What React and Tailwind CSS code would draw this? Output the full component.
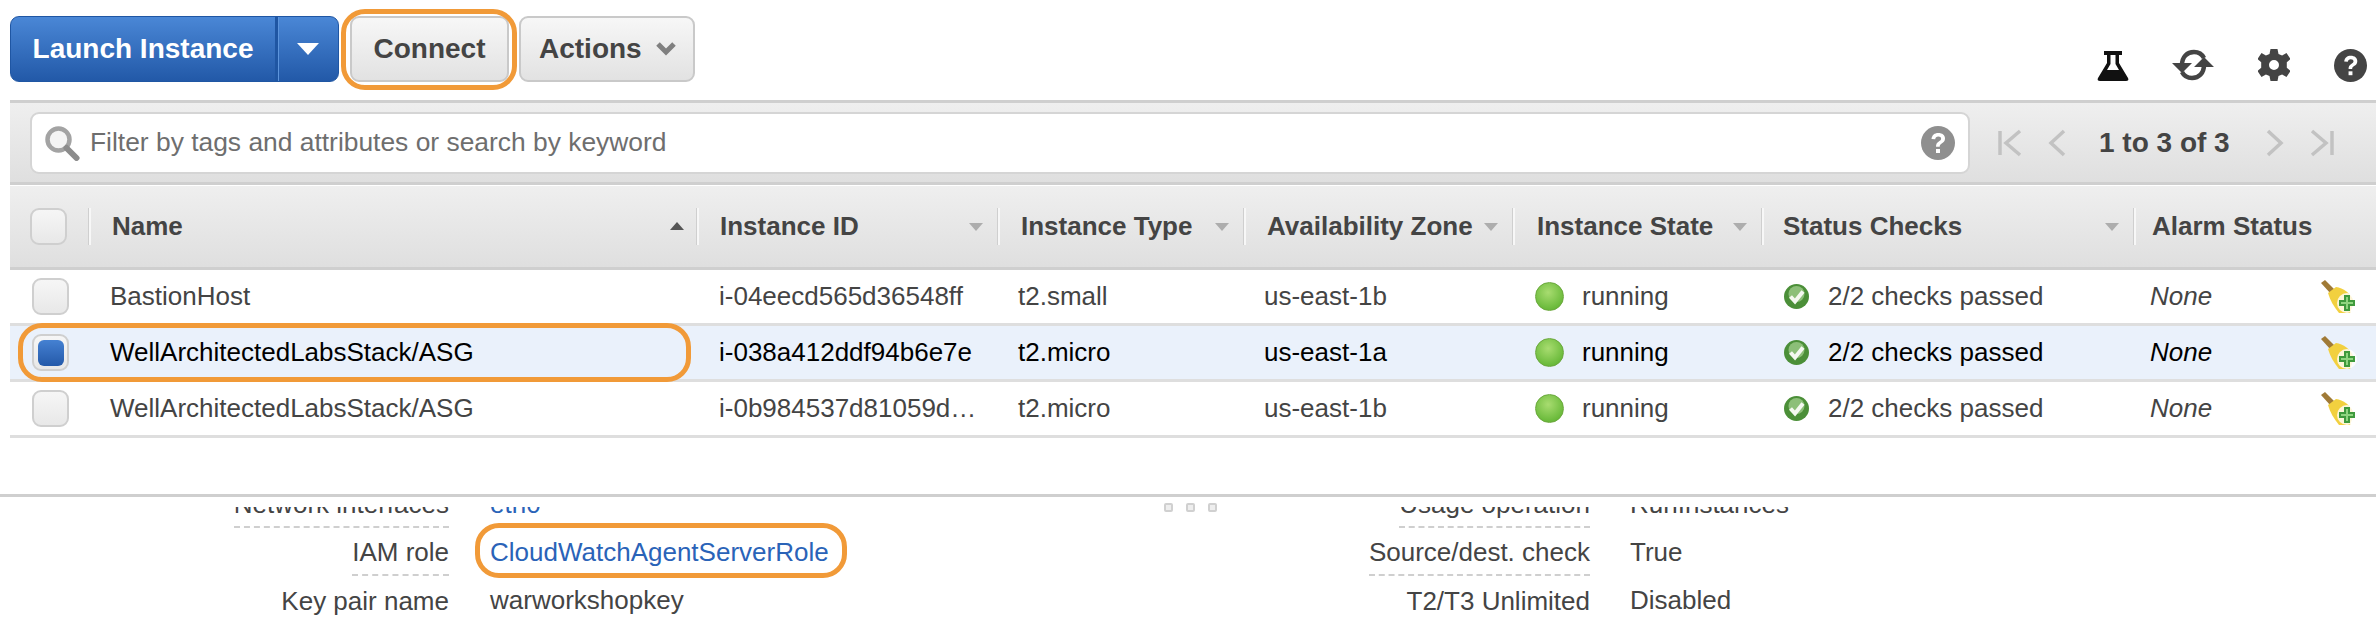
import React from "react";

const GRID = "grid grid-cols-[79px_608px_301px_246px_269px_249px_372px_242px]";

const Flask = () => (
  <svg width="32" height="33" viewBox="0 0 32 33">
    <path d="M7 2h18v4h-3v8l9 15c1 2 0 3-2 3H3c-2 0-3-1-2-3l9-15V6H7z" fill="#111" />
    <path d="M13.5 6h5v9l3.5 6H10l3.500-6z" fill="#fff" />
  </svg>
);

const Refresh = () => (
  <svg width="42" height="34" viewBox="0 0 42 34" fill="none">
    <path d="M10 17C10 9 15 4 22 4c5 0 8 2 10 6" stroke="#444" strokeWidth="4.5" />
    <path d="M32 17c0 8-5 13-12 13-5 0-8-2-10-6" stroke="#444" strokeWidth="4.5" />
    <path d="M0 15h20l-10 10zM22 19h20L32 9z" fill="#444" />
  </svg>
);

const Gear = () => (
  <svg width="32" height="34" viewBox="0 0 32 34">
    <path
      fill="#444"
      fillRule="evenodd"
      d="M12.5 1h7l1 5 3.6 1.6L28.5 5l4 6-3.7 3.3v5.4L32.5 23l-4 6-4.400-2.600L20.500 28l-1 5h-7l-1-5-3.600-1.600L3.500 29l-4-6 3.700-3.300v-5.400L-.5 11l4-6 4.400 2.600L11.500 6zM16 12a5 5 0 1 0 0 10 5 5 0 0 0 0-10z"
    />
  </svg>
);

const Help = ({ color, size }) => (
  <svg width={size} height={size} viewBox="0 0 34 34">
    <circle cx="17" cy="17" r="17" fill={color} />
    <path d="M10.500 13c.5-4 3-6 6.800-6 4 0 6.700 2.200 6.700 5.500 0 2.500-1.300 3.800-3.300 5-1.500 1-2 1.700-2 3.200H15c0-2.700.8-3.900 2.800-5.200 1.500-1 2.300-1.600 2.300-2.800 0-1.300-1-2.200-2.800-2.200-1.900 0-2.800 1-3.100 2.700z" fill="#fff" />
    <rect x="15" y="23" width="4" height="4" fill="#fff" />
  </svg>
);

const Search = () => (
  <svg width="36" height="36" viewBox="0 0 36 36" fill="none">
    <circle cx="14.500" cy="14.500" r="11" stroke="#a3a3a3" strokeWidth="4.500" fill="#f4f4f4" />
    <path d="M22.500 23l10 10" stroke="#8c8c8c" strokeWidth="6" strokeLinecap="round" />
  </svg>
);

const Pager = ({ d, w }) => (
  <svg width={w} height="28" viewBox={`0 0 ${w} 28`} fill="none">
    <path d={d} stroke="#c2c2c2" strokeWidth="3.500" />
  </svg>
);

const Dot = () => (
  <span className="block w-[29px] h-[29px] rounded-full border border-[#6aa83c] bg-[radial-gradient(circle_at_45%_35%,#a8dc70,#6cbb3c_70%,#58a32e)]" />
);

const Check = () => (
  <svg width="25" height="25" viewBox="0 0 25 25">
    <circle cx="12.500" cy="12.500" r="12.500" fill="#4b8f38" />
    <circle cx="12.500" cy="10" r="8" fill="#8cbf78" />
    <path d="M6.500 12.500l4.500 5 8-10" stroke="#f4f8f0" strokeWidth="4" fill="none" />
  </svg>
);

const Broom = () => (
  <svg width="38" height="33" viewBox="0 0 38 33">
    <path d="M1 3l4-3 10 10-4 4z" fill="#a07a36" />
    <path d="M8 13l8-6c7 1 15 6 18 15l-4 11H19C14 27 10 20 8 13z" fill="#f2d03f" />
    <circle cx="27" cy="23" r="10" fill="#fff" opacity="0.8" />
    <path d="M24 15h6v5h5v6h-5v5h-6v-5h-5v-6h5z" fill="#3f9a3c" />
    <path d="M26 17h2v5h5v2h-5v5h-2v-5h-5v-2h5z" fill="#8fd47f" />
  </svg>
);

const Box = ({ className = "", checked }) => (
  <span className={`flex items-center justify-center w-[37px] h-[37px] rounded-[9px] border-2 border-[#cfcfcf] bg-gradient-to-b from-[#f6f6f6] to-[#e8e8e8] ${className}`}>
    {checked && <span className="block w-[26px] h-[26px] rounded-[6px] bg-gradient-to-b from-[#4581d2] to-[#2459a9]" />}
  </span>
);

const Head = ({ label, pl, arrow }) => (
  <div className="relative flex items-center h-[37px] mt-[22px] border-l-2 border-[#f7f7f7] shadow-[-1px_0_0_#cfcfcf]" style={{ paddingLeft: pl }}>
    <span className="font-bold text-[26px] text-[#444] whitespace-nowrap">{label}</span>
    {arrow === "up" && <span className="absolute right-[13px] top-[14px] w-0 h-0 border-x-[7px] border-x-transparent border-b-[8px] border-b-[#555]" />}
    {arrow === "down" && <span className="absolute right-[15px] top-[15px] w-0 h-0 border-x-[7px] border-x-transparent border-t-[8px] border-t-[#adadad]" />}
  </div>
);

const rows = [
  { name: "BastionHost", id: "i-04eecd565d36548ff", type: "t2.small", zone: "us-east-1b" },
  { name: "WellArchitectedLabsStack/ASG", id: "i-038a412ddf94b6e7e", type: "t2.micro", zone: "us-east-1a", sel: true },
  { name: "WellArchitectedLabsStack/ASG", id: "i-0b984537d81059d…", type: "t2.micro", zone: "us-east-1b" },
];

const Row = ({ r }) => (
  <div className={`${GRID} relative h-[56px] items-center border-b-[3px] text-[26px] ${r.sel ? "bg-[#eaf1fb] border-[#dedede] text-black" : "bg-white border-[#dedede] text-[#444]"}`}>
    <Box className="ml-[22px]" checked={r.sel} />
    <div className="pl-[21px]">{r.name}</div>
    <div className="pl-[22px] whitespace-nowrap">{r.id}</div>
    <div className="pl-[20px]">{r.type}</div>
    <div className="pl-[20px]">{r.zone}</div>
    <div className="pl-[22px] flex items-center gap-[18px]"><Dot />running</div>
    <div className="pl-[22px] flex items-center gap-[19px]"><Check />2/2 checks passed</div>
    <div className="pl-[16px] flex items-center justify-between pr-[18px]"><i>None</i><Broom /></div>
    {r.sel && <span className="absolute left-[8px] top-[-3px] w-[673px] h-[59px] rounded-[24px] border-[5px] border-[#f19a38]" />}
  </div>
);

const Label = ({ children, last }) => (
  <span className={`flex items-center h-full whitespace-nowrap ${last ? "pt-[2px]" : "border-b-2 border-dashed border-[#cfcfcf] pt-[2px]"}`}>{children}</span>
);

const DetailRow = ({ a, b, c, d, blue, highlight, last }) => (
  <div className="flex h-[48px] text-[26px] text-[#444]">
    <div className="flex justify-end w-[449px]"><Label last={last}>{a}</Label></div>
    <div className={`relative flex items-center ml-[41px] w-[659px] ${blue ? "text-[#2a63b8]" : ""}`}>
      {b}
      {highlight && <span className="absolute left-[-15px] top-[-5px] w-[372px] h-[55px] rounded-[24px] border-[5px] border-[#f19a38]" />}
    </div>
    <div className="flex justify-end w-[441px]"><Label last={last}>{c}</Label></div>
    <div className="flex items-center ml-[40px]">{d}</div>
  </div>
);

export default function App() {
  return (
    <div className="relative w-[2376px] h-[622px] overflow-hidden bg-white font-['Liberation_Sans',Arial,sans-serif]">
      {/* toolbar */}
      <div className="flex items-start h-[100px] pl-[10px] pt-[16px]">
        <div className="flex w-[329px] h-[66px] rounded-[9px] border border-[#1f56a3] bg-gradient-to-b from-[#4a87d6] to-[#2259a8] text-white">
          <div className="flex items-center justify-center w-[264px] font-bold text-[28px]">Launch Instance</div>
          <div className="flex items-center justify-center flex-1 border-l-[3px] border-[#1f56a3] shadow-[inset_1px_0_0_#5d95dc]">
            <span className="w-0 h-0 border-x-[11px] border-x-transparent border-t-[12px] border-t-white" />
          </div>
        </div>
        <div className="relative ml-[11px]">
          <button className="flex items-center justify-center w-[159px] h-[66px] rounded-[9px] border-2 border-[#c9c9c9] bg-gradient-to-b from-[#f7f7f7] to-[#e2e2e2] font-bold text-[28px] text-[#444]">Connect</button>
          <span className="absolute left-[-9px] top-[-7px] w-[176px] h-[81px] rounded-[24px] border-[5px] border-[#f19a38]" />
        </div>
        <button className="flex items-center ml-[10px] pl-[18px] gap-[14px] w-[176px] h-[66px] rounded-[9px] border-2 border-[#c9c9c9] bg-gradient-to-b from-[#f7f7f7] to-[#e2e2e2] font-bold text-[28px] text-[#444]">
          Actions
          <svg width="20" height="14" viewBox="0 0 20 14" fill="none"><path d="M2 2l8 8 8-8" stroke="#808080" strokeWidth="5" /></svg>
        </button>
        <div className="flex items-center ml-auto mt-[32px] pr-[9px]">
          <Flask />
          <span className="ml-[43px]"><Refresh /></span>
          <span className="ml-[44px]"><Gear /></span>
          <span className="ml-[44px]"><Help color="#444" size={33} /></span>
        </div>
      </div>

      {/* filter bar + table */}
      <div className="ml-[10px]">
        <div className="flex items-center h-[85px] border-t-[3px] border-b-[3px] border-[#cfcfcf] pl-[20px] bg-gradient-to-b from-[#efefef] to-[#dfdfdf]">
          <div className="flex items-center w-[1940px] h-[62px] rounded-[9px] border-2 border-[#d5d5d5] bg-white pl-[12px] pr-[13px]">
            <Search />
            <span className="ml-[10px] text-[26.4px] text-[#6e6e6e]">Filter by tags and attributes or search by keyword</span>
            <span className="ml-auto"><Help color="#8f8f8f" size={34} /></span>
          </div>
          <div className="flex items-center ml-[28px]">
            <Pager w={24} d="M2 2v24M22 2L8 14l14 12" />
            <span className="ml-[26px]"><Pager w={18} d="M16 2L3 14l13 12" /></span>
            <span className="ml-[33px] font-bold text-[28px] text-[#444] whitespace-nowrap">1 to 3 of 3</span>
            <span className="ml-[36px]"><Pager w={18} d="M2 2l13 12L2 26" /></span>
            <span className="ml-[26px]"><Pager w={24} d="M2 2l14 12L2 26M22 2v24" /></span>
          </div>
        </div>
        <div className={`${GRID} h-[84px] mt-[1px] border-b-[3px] border-[#cfcfcf] bg-gradient-to-b from-[#efefef] to-[#dfdfdf]`}>
          <Box className="ml-[20px] mt-[22px]" />
          <Head label="Name" pl={21} arrow="up" />
          <Head label="Instance ID" pl={21} arrow="down" />
          <Head label="Instance Type" pl={21} arrow="down" />
          <Head label="Availability Zone" pl={21} arrow="down" />
          <Head label="Instance State" pl={22} arrow="down" />
          <Head label="Status Checks" pl={19} arrow="down" />
          <Head label="Alarm Status" pl={16} />
        </div>
        {rows.map((r, i) => <Row key={i} r={r} />)}
      </div>

      {/* details */}
      <div className="relative mt-[56px] border-t-[3px] border-[#cfcfcf]">
        <div className="absolute left-[1164px] top-[6px] flex gap-[13px]">
          <span className="w-[9px] h-[9px] rounded-[2px] border-2 border-[#d0d0d0] bg-[#eee]" />
          <span className="w-[9px] h-[9px] rounded-[2px] border-2 border-[#d0d0d0] bg-[#eee]" />
          <span className="w-[9px] h-[9px] rounded-[2px] border-2 border-[#d0d0d0] bg-[#eee]" />
        </div>
        <div className="mt-[10px] h-[115px] overflow-hidden">
          <div className="mt-[-27px]">
            <DetailRow a="Network interfaces" b="eth0" c="Usage operation" d="RunInstances" blue />
            <DetailRow a="IAM role" b="CloudWatchAgentServerRole" c="Source/dest. check" d="True" blue highlight />
            <DetailRow a="Key pair name" b="warworkshopkey" c="T2/T3 Unlimited" d="Disabled" last />
          </div>
        </div>
      </div>
    </div>
  );
}
